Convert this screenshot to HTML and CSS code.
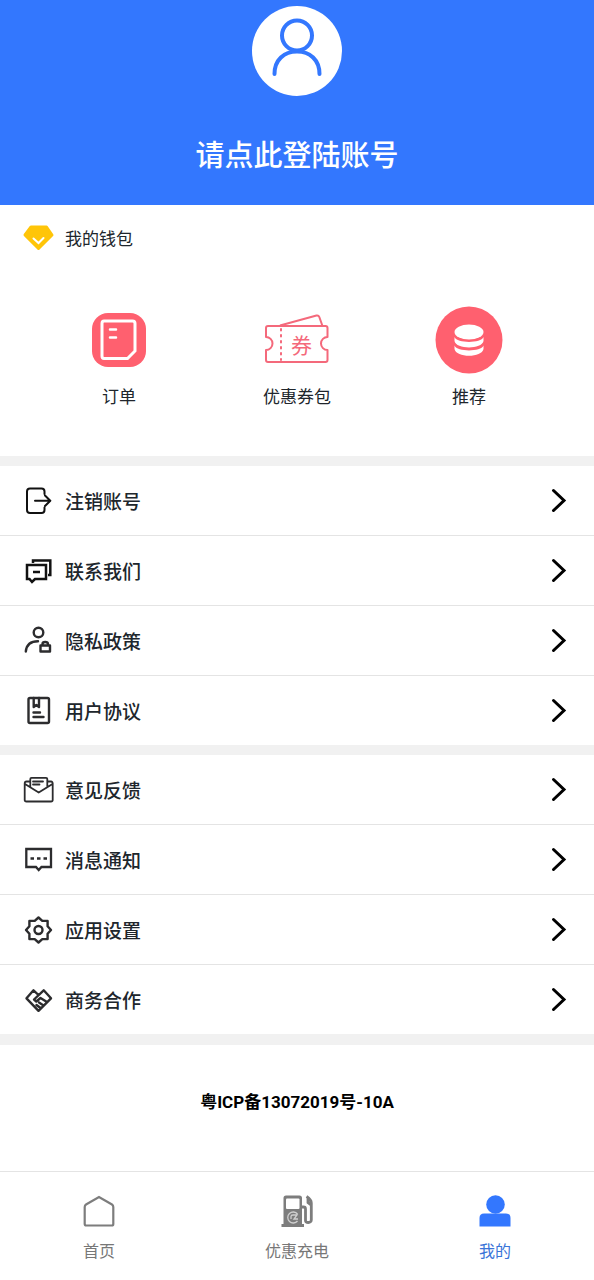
FILE: index.html
```
<!DOCTYPE html>
<html lang="zh-CN">
<head>
<meta charset="utf-8">
<meta name="viewport" content="width=device-width, initial-scale=1">
<title>我的</title>
<link rel="stylesheet" href="styles.css">
</head>
<body>
<svg class="defs" aria-hidden="true">
  <symbol id="chevron" viewBox="0 0 16 25"><path d="M2.500 2.500 13 12.500 2.500 22.500" fill="none" stroke="#000" stroke-width="3" stroke-linecap="round"/></symbol>
</svg>
<button class="profile" type="button">
  <svg class="avatar" viewBox="0 0 90 90" aria-hidden="true">
    <circle cx="45" cy="45" r="45" fill="#fff"/>
    <g fill="none" stroke="#3377fe" stroke-width="4" stroke-linecap="round">
      <circle cx="45" cy="29.500" r="15"/>
      <path d="M22.500 68C22.500 54 32 45.500 45 45.500S67.500 54 67.500 68"/>
    </g>
  </svg>
  <span class="profile-title">请点此登陆账号</span>
</button>

<main class="content">
  <section class="wallet">
    <h2 class="wallet-title">
      <svg class="icon" viewBox="0 0 31 31" aria-hidden="true">
        <path d="M8 4H23.500L29 12 15.500 25.500 2 12Z" fill="#ffc508" stroke="#ffc508" stroke-width="3" stroke-linejoin="round"/>
        <path d="M10.500 15.500 15.500 20 20.500 15" fill="none" stroke="#fff" stroke-width="2" stroke-linecap="round"/>
      </svg>
      我的钱包
    </h2>
    <div class="shortcuts">
      <a class="shortcut" href="#orders">
        <svg class="shortcut-icon" viewBox="0 0 68 68" aria-hidden="true">
          <rect x="7" y="7" width="54" height="54" rx="16" fill="#ff606f"/>
          <path d="M19 15H47.500Q50 15 50 17.500V45L42.500 52.500H19Q17 52.500 17 50V17.500Q17 15 19 15Z" fill="none" stroke="#fff" stroke-width="3"/>
          <path d="M25 23.500H31M25 31.500H31" stroke="#fff" stroke-width="2.500" stroke-linecap="round"/>
        </svg>
        订单
      </a>
      <a class="shortcut" href="#coupons">
        <svg class="shortcut-icon" viewBox="0 0 68 68" aria-hidden="true">
          <g fill="none" stroke="#f4697b" stroke-width="2" stroke-linejoin="round">
            <path d="M5 20H62.500Q64.500 20 64.500 22V31A6.500 6.500 0 0 0 64.500 44V54Q64.500 56 62.500 56H5Q3 56 3 54V44A6.500 6.500 0 0 0 3 31V22Q3 20 5 20Z"/>
            <path d="M17 19.500 53.500 9.500Q55.500 9 56.300 11L59.500 20"/>
            <path d="M18 23V54" stroke-dasharray="1.500 4.500" stroke-linecap="round"/>
          </g>
          <text class="coupon-mark" x="38.500" y="47" text-anchor="middle">券</text>
        </svg>
        优惠券包
      </a>
      <a class="shortcut" href="#recommend">
        <svg class="shortcut-icon" viewBox="0 0 68 68" aria-hidden="true">
          <circle cx="34" cy="34" r="33.500" fill="#ff606f"/>
          <g fill="#fff">
            <ellipse cx="34" cy="26" rx="14.500" ry="7.500"/>
            <path d="M19.500 31C22 37.500 46 37.500 48.500 31V35C47 43.500 21 43.500 19.500 35Z"/>
            <path d="M19.500 39.500C22 46 46 46 48.500 39.500V43C47 52 21 52 19.500 43Z"/>
          </g>
        </svg>
        推荐
      </a>
    </div>
  </section>

  <ul class="menu">
    <li><a class="menu-row" href="#logout">
      <svg class="icon line" viewBox="0 0 31 31" aria-hidden="true"><path d="M21.500 9V6.500Q21.500 3.500 18.500 3.500H7Q4 3.500 4 6.500V25Q4 28 7 28H18.500Q21.500 28 21.500 25V22.500M12 15.700H27M22 10.500 27.300 15.700 22 21"/></svg>
      <span class="menu-label">注销账号</span><svg class="chevron" aria-hidden="true"><use href="#chevron"/></svg></a></li>
    <li><a class="menu-row" href="#contact">
      <svg class="icon line bold" viewBox="0 0 31 31" aria-hidden="true"><path d="M4 10H23V24H12L9 27 6.500 24H4ZM10 17H17M10 8V5.500H27.300V20H25"/></svg>
      <span class="menu-label">联系我们</span><svg class="chevron" aria-hidden="true"><use href="#chevron"/></svg></a></li>
    <li><a class="menu-row" href="#privacy">
      <svg class="icon line gray" viewBox="0 0 31 31" aria-hidden="true"><circle cx="15.500" cy="7.500" r="4.800"/><path d="M2.800 26.500C3.500 20 8 16.300 15 16.300M17.500 20.500H27V26.500H17.500ZM19.500 20V19Q19.500 17 22.200 17T25 19V20"/></svg>
      <span class="menu-label">隐私政策</span><svg class="chevron" aria-hidden="true"><use href="#chevron"/></svg></a></li>
    <li><a class="menu-row" href="#terms">
      <svg class="icon line gray" viewBox="0 0 31 31" aria-hidden="true"><rect x="5.500" y="3" width="20.500" height="25" rx="1.500"/><path d="M10.700 3V12L13.300 10 16 12V3M10.500 17.500H17M10.500 22H20.500"/></svg>
      <span class="menu-label">用户协议</span><svg class="chevron" aria-hidden="true"><use href="#chevron"/></svg></a></li>
  </ul>

  <ul class="menu">
    <li><a class="menu-row" href="#feedback">
      <svg class="icon line thin" viewBox="0 0 31 31" aria-hidden="true"><path d="M7 7.500H3.500Q1.700 7.500 1.700 9.500V26Q1.700 27.500 3.500 27.500H28Q29.700 27.500 29.700 26V9.500Q29.700 7.500 28 7.500H24.500M2 10 15.700 18.500 29.500 10M7.300 13V5Q7.300 3.800 8.500 3.800H23Q24.300 3.800 24.300 5V13M10 7.500H20M10 10.500H16.500"/></svg>
      <span class="menu-label">意见反馈</span><svg class="chevron" aria-hidden="true"><use href="#chevron"/></svg></a></li>
    <li><a class="menu-row" href="#messages">
      <svg class="icon line square" viewBox="0 0 31 31" aria-hidden="true"><path d="M3.300 5H28V23H18.500L15.700 26 13 23H3.300ZM7.500 14.500H11M14 14.500H17.500M20.500 14.500H24"/></svg>
      <span class="menu-label">消息通知</span><svg class="chevron" aria-hidden="true"><use href="#chevron"/></svg></a></li>
    <li><a class="menu-row" href="#settings">
      <svg class="icon line gray" viewBox="0 0 31 31" aria-hidden="true"><path d="M15.500 3.500 19.300 6.900H24.600V12.200L28 16 24.600 19.800V25.100H19.300L15.500 28.500 11.700 25.100H6.400V19.800L3 16 6.400 12.200V6.900H11.700Z"/><circle cx="15.500" cy="16" r="4"/></svg>
      <span class="menu-label">应用设置</span><svg class="chevron" aria-hidden="true"><use href="#chevron"/></svg></a></li>
    <li><a class="menu-row" href="#business">
      <svg class="icon line gray" viewBox="0 0 31 31" aria-hidden="true"><path d="M15.500 11 10.500 6.300 3.500 14.300 15.500 26.800 28 14.300 20.700 6.300 11 15.500 13.300 17.500 17.500 14 24 18M16 18.500 20.500 21.500M13.500 21 17.500 24"/></svg>
      <span class="menu-label">商务合作</span><svg class="chevron" aria-hidden="true"><use href="#chevron"/></svg></a></li>
  </ul>

  <footer class="record">粤ICP备13072019号-10A</footer>
</main>

<nav class="tabs">
  <a class="tab" href="#home">
    <svg class="tab-icon" viewBox="0 0 34 34" aria-hidden="true"><path d="M4 10.500 17 3 30 10.500Q31.300 11.300 31.300 13V30Q31.300 31.500 29.800 31.500H4.200Q2.700 31.500 2.700 30V13Q2.700 11.300 4 10.500Z" fill="none" stroke="#7d7d7d" stroke-width="2.200"/></svg>
    首页
  </a>
  <a class="tab" href="#charge">
    <svg class="tab-icon" viewBox="0 0 34 34" aria-hidden="true">
      <path d="M3.500 30V4Q3.500 1.500 6 1.500H19.500Q22 1.500 22 4V30H24V33H1.500V30Z" fill="#7d7d7d"/>
      <rect x="6" y="4.500" width="13.500" height="10.500" rx="1" fill="#fff"/>
      <path d="M17.500 20A5.500 5.500 0 1 0 17.500 27M11 25V22.500Q11 21 13 21H17L14 25H18" fill="none" stroke="#d0d0d0" stroke-width="1.300"/>
      <path d="M22 13H23.500Q25.500 13 25.500 15V26.500Q25.500 28.500 28.300 28.500T31.300 26V9Q31.300 5.500 26.500 2.500M28 4.500V8.500L31 11" fill="none" stroke="#7d7d7d" stroke-width="2.800"/>
    </svg>
    优惠充电
  </a>
  <a class="tab active" href="#me" aria-current="page">
    <svg class="tab-icon" viewBox="0 0 34 34" aria-hidden="true"><g fill="#3377fe"><circle cx="17.500" cy="10.500" r="9.300"/><path d="M1.500 32.500V24Q1.500 19.500 6 19.500H28Q32.500 19.500 32.500 24V32.500Z"/></g></svg>
    我的
  </a>
</nav>
</body>
</html>
```
FILE: styles.css
```
* {
  box-sizing: border-box;
}

body {
  margin: 0;
  min-height: 100vh;
  display: flex;
  flex-direction: column;
  background: #fff;
  color: #20262c;
  font-family: Roboto, "Noto Sans CJK SC", sans-serif;
  font-size: 17px;
  line-height: 24px;
}

a {
  color: inherit;
  text-decoration: none;
}

.defs {
  display: none;
}

.profile {
  display: flex;
  flex-direction: column;
  align-items: center;
  gap: 40px;
  padding: 6px 16px 29px;
  border: 0;
  background: #3377fe;
  color: #fff;
  font: inherit;
  cursor: pointer;
}

.avatar {
  width: 90px;
  height: 90px;
}

.profile-title {
  font-size: 29px;
  font-weight: 500;
  line-height: 40px;
}

.content {
  flex: 1;
  display: flex;
  flex-direction: column;
}

.wallet-title {
  display: flex;
  align-items: center;
  gap: 11px;
  margin: 0;
  padding: 18px 23px;
  font-size: inherit;
  font-weight: 400;
}

.icon {
  flex: none;
  width: 31px;
  height: 31px;
}

.line {
  fill: none;
  stroke: #111;
  stroke-width: 2;
  stroke-linecap: round;
  stroke-linejoin: round;
}

.bold {
  stroke-width: 2.5;
  stroke-linejoin: miter;
  stroke-linecap: butt;
}

.gray {
  stroke: #2c2c2e;
  stroke-width: 2.4;
}

.square {
  stroke: #2c2c2e;
  stroke-width: 2.3;
  stroke-linejoin: miter;
  stroke-linecap: butt;
}

.thin {
  stroke: #2c2c2e;
  stroke-width: 1.8;
}

.shortcuts {
  display: grid;
  grid-template-columns: 178fr 178fr 166fr;
  padding: 34px 42px 47px 30px;
}

.shortcut {
  display: flex;
  flex-direction: column;
  align-items: center;
  gap: 11px;
}

.shortcut-icon {
  width: 68px;
  height: 68px;
}

.coupon-mark {
  fill: #f4697b;
  font-size: 21px;
}

.menu {
  margin: 0;
  padding: 0;
  list-style: none;
  border-top: 10px solid #f1f1f1;
}

.menu li + li {
  border-top: 1px solid #e4e4e4;
}

.menu-row {
  display: flex;
  align-items: center;
  gap: 11px;
  padding: 19px 27px 19px 23px;
}

.menu-label {
  flex: 1;
  padding-top: 4px;
  font-size: 19px;
  font-weight: 500;
}

.chevron {
  width: 16px;
  height: 25px;
}

.record {
  flex: 1;
  border-top: 11px solid #f1f1f1;
  padding: 45px 16px;
  color: #000;
  font-weight: 700;
  text-align: center;
}

.tabs {
  display: grid;
  grid-template-columns: repeat(3, 1fr);
  border-top: 1px solid #e4e4e4;
}

.tab {
  display: flex;
  flex-direction: column;
  align-items: center;
  gap: 12px;
  padding: 22px 0 16px;
  color: #777;
  font-size: 16px;
}

.tab-icon {
  width: 34px;
  height: 34px;
}

.active {
  color: #3a74d8;
}
```
